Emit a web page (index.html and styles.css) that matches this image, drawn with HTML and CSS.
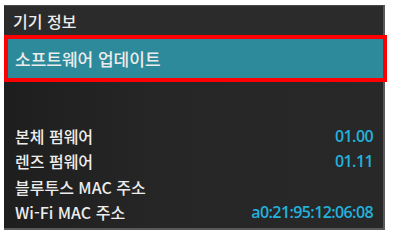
FILE: index.html
```html
<!DOCTYPE html>
<html lang="ko">
<head>
    <meta charset="UTF-8">
    <meta name="viewport" content="width=device-width, initial-scale=1.0">
    <title>기기 정보</title>
    <link rel="stylesheet" href="styles.css">
</head>
<body>

    <div class="screen">
        <div class="title">기기 정보</div>

        <div class="menu-item selected">
            소프트웨어 업데이트
            <div class="highlight"></div>
        </div>

        <div class="spacer"></div>

        <div class="info-list">
            <div class="info-row">
                <span class="label">본체 펌웨어</span>
                <span class="value">01.00</span>
            </div>
            <div class="info-row">
                <span class="label">렌즈 펌웨어</span>
                <span class="value">01.11</span>
            </div>
            <div class="info-row">
                <span class="label">블루투스 MAC 주소</span>
                <span class="value"></span>
            </div>
            <div class="info-row">
                <span class="label">Wi-Fi MAC 주소</span>
                <span class="value">a0:21:95:12:06:08</span>
            </div>
        </div>
    </div>

</body>
</html>
```

FILE: styles.css
```css
:root {
    --screen: #232323;
    --header: #2b2b2b;
    --teal: #2d8a9b;
    --text: #ececec;
    --value: #22b2dc;
    --mark: #ff0000;
}

* {
    margin: 0;
    padding: 0;
    box-sizing: border-box;
}

body {
    background-color: #ffffff;
    font-family: 'Noto Sans CJK KR', 'Noto Sans', sans-serif;
    color: var(--text);
}

.screen {
    position: relative;
    margin: 5px 0 0 4px;
    width: 381px;
    height: 225px;
    background: linear-gradient(to right, #1e1e1e, #262626 40%, #282828);
    border-top: 1px solid #4a4a4a;
    border-right: 2px solid #5a5a5a;
    border-bottom: 2px solid #5a5a5a;
}

.title {
    height: 29px;
    padding-left: 9px;
    background-color: var(--header);
    font-size: 16px;
    font-weight: 500;
    line-height: 30px;
}

.menu-item {
    position: relative;
    height: 47px;
    padding-left: 11px;
    font-size: 17px;
    font-weight: 500;
    line-height: 47px;
}

.menu-item.selected {
    background-color: var(--teal);
}

.highlight {
    position: absolute;
    top: 0;
    left: 0;
    right: -4px;
    bottom: 0;
    border: 4px solid var(--mark);
}

.spacer {
    height: 41px;
}

.info-list {
    display: flex;
    flex-direction: column;
    padding: 0 10px 0 11px;
}

.info-row {
    display: flex;
    justify-content: space-between;
    align-items: center;
    height: 25.5px;
    font-size: 16px;
    font-weight: 500;
}

.value {
    color: var(--value);
    font-family: 'Open Sans', 'Noto Sans', sans-serif;
    font-size: 16px;
    font-weight: 600;
    letter-spacing: -0.6px;
}
```
